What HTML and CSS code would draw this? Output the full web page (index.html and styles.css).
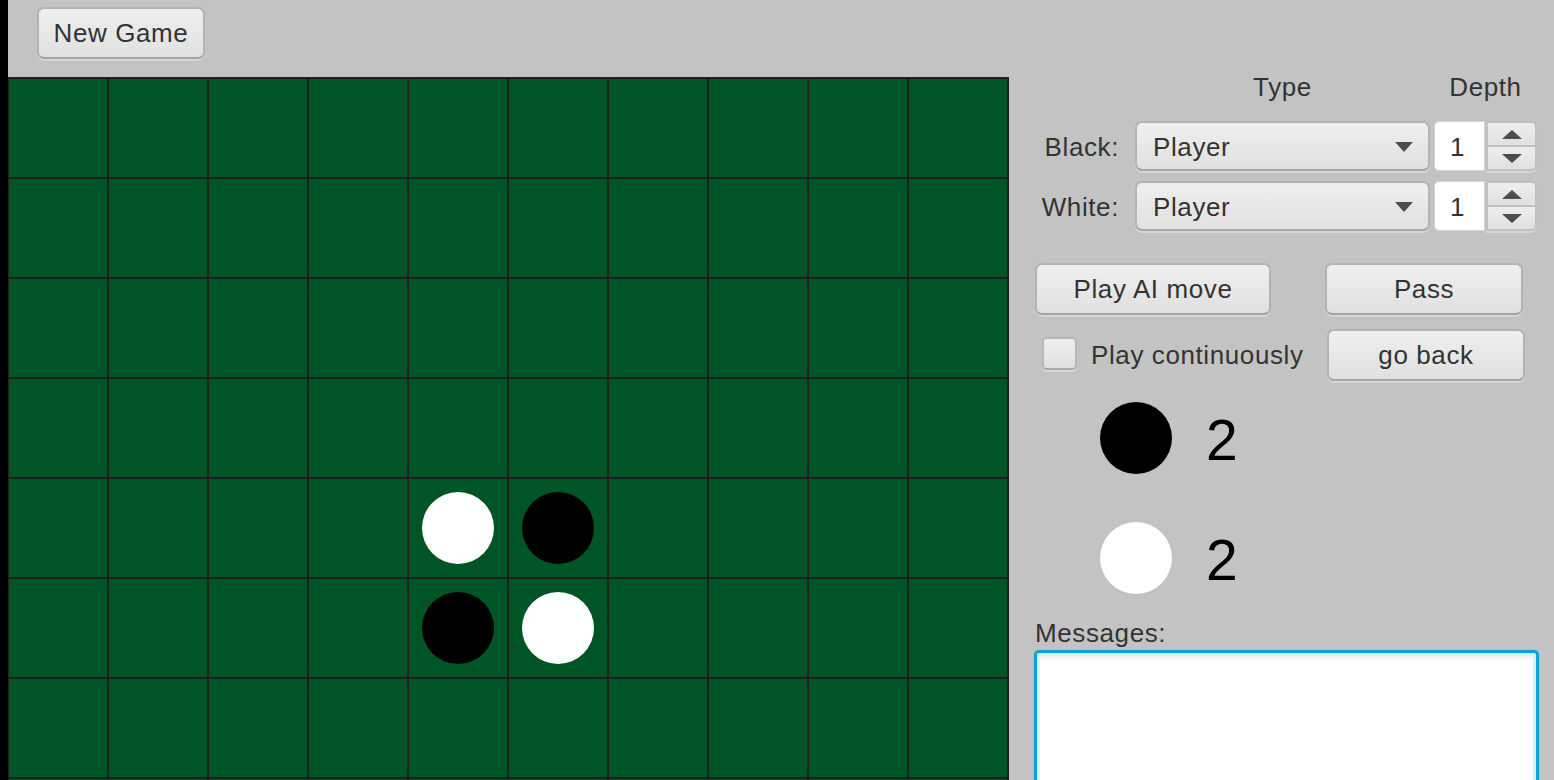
FILE: index.html
```html
<!DOCTYPE html>
<html lang="en">
<head>
<meta charset="utf-8">
<title>Othello</title>
<link rel="stylesheet" href="styles.css">
</head>
<body>
<div class="app">
  <div class="toolbar">
    <button class="btn new-game">New Game</button>
  </div>
  <div class="main">
    <div class="board">
      <div class="cell"></div><div class="cell"></div><div class="cell"></div><div class="cell"></div><div class="cell"></div><div class="cell"></div><div class="cell"></div><div class="cell"></div><div class="cell"></div><div class="cell"></div>
      <div class="cell"></div><div class="cell"></div><div class="cell"></div><div class="cell"></div><div class="cell"></div><div class="cell"></div><div class="cell"></div><div class="cell"></div><div class="cell"></div><div class="cell"></div>
      <div class="cell"></div><div class="cell"></div><div class="cell"></div><div class="cell"></div><div class="cell"></div><div class="cell"></div><div class="cell"></div><div class="cell"></div><div class="cell"></div><div class="cell"></div>
      <div class="cell"></div><div class="cell"></div><div class="cell"></div><div class="cell"></div><div class="cell"></div><div class="cell"></div><div class="cell"></div><div class="cell"></div><div class="cell"></div><div class="cell"></div>
      <div class="cell"></div><div class="cell"></div><div class="cell"></div><div class="cell"></div><div class="cell"><div class="disc white"></div></div><div class="cell"><div class="disc black"></div></div><div class="cell"></div><div class="cell"></div><div class="cell"></div><div class="cell"></div>
      <div class="cell"></div><div class="cell"></div><div class="cell"></div><div class="cell"></div><div class="cell"><div class="disc black"></div></div><div class="cell"><div class="disc white"></div></div><div class="cell"></div><div class="cell"></div><div class="cell"></div><div class="cell"></div>
      <div class="cell"></div><div class="cell"></div><div class="cell"></div><div class="cell"></div><div class="cell"></div><div class="cell"></div><div class="cell"></div><div class="cell"></div><div class="cell"></div><div class="cell"></div>
      <div class="cell"></div><div class="cell"></div><div class="cell"></div><div class="cell"></div><div class="cell"></div><div class="cell"></div><div class="cell"></div><div class="cell"></div><div class="cell"></div><div class="cell"></div>
      <div class="cell"></div><div class="cell"></div><div class="cell"></div><div class="cell"></div><div class="cell"></div><div class="cell"></div><div class="cell"></div><div class="cell"></div><div class="cell"></div><div class="cell"></div>
      <div class="cell"></div><div class="cell"></div><div class="cell"></div><div class="cell"></div><div class="cell"></div><div class="cell"></div><div class="cell"></div><div class="cell"></div><div class="cell"></div><div class="cell"></div>
    </div>
    <div class="side">
      <div class="hdr">
        <div class="hdr-gap"></div>
        <div class="hdr-type">Type</div>
        <div class="hdr-depth">Depth</div>
      </div>
      <div class="prow first">
        <div class="plabel">Black:</div>
        <div class="combo"><span class="combo-text">Player</span><span class="combo-arrow"></span></div>
        <div class="spinner">
          <div class="spin-field">1</div>
          <div class="spin-btns">
            <div class="spin-btn"><span class="tri-up"></span></div>
            <div class="spin-btn"><span class="tri-down"></span></div>
          </div>
        </div>
      </div>
      <div class="prow">
        <div class="plabel">White:</div>
        <div class="combo"><span class="combo-text">Player</span><span class="combo-arrow"></span></div>
        <div class="spinner">
          <div class="spin-field">1</div>
          <div class="spin-btns">
            <div class="spin-btn"><span class="tri-up"></span></div>
            <div class="spin-btn"><span class="tri-down"></span></div>
          </div>
        </div>
      </div>
      <div class="actions">
        <div class="act-cell"><button class="btn ai-btn">Play AI move</button></div>
        <div class="act-cell"><button class="btn pass-btn">Pass</button></div>
        <div class="act-cell check-row">
          <span class="checkbox"></span>
          <span class="check-label">Play continuously</span>
        </div>
        <div class="act-cell"><button class="btn back-btn">go back</button></div>
      </div>
      <div class="score first-score">
        <div class="disc black"></div>
        <div class="num">2</div>
      </div>
      <div class="score second-score">
        <div class="disc white"></div>
        <div class="num">2</div>
      </div>
      <div class="msg-label">Messages:</div>
      <div class="messages"></div>
    </div>
  </div>
</div>
</body>
</html>
```
FILE: styles.css
```css
* { box-sizing: border-box; }
html, body { margin: 0; padding: 0; height: 100%; overflow: hidden; }
body {
  background: #c3c3c3;
  font-family: "Liberation Sans", Arial, sans-serif;
  font-size: 26px;
  letter-spacing: 0.6px;
  color: #333333;
}
.app {
  border-left: 8px solid #000;
  height: 780px;
  display: flex;
  flex-direction: column;
}
.toolbar {
  height: 77px;
  flex: none;
  padding: 7px 0 0 29px;
}
.btn {
  display: flex;
  align-items: center;
  justify-content: center;
  height: 52px;
  padding: 0;
  margin: 0;
  border: 2px solid #b3b3b3;
  border-bottom-color: #a6a6a6;
  border-radius: 7px;
  background: linear-gradient(#efefef, #e0e0e0);
  box-shadow: 0 2px 0 #d6d6d6;
  font-family: inherit;
  font-size: 26px;
  letter-spacing: 0.6px;
  color: #333333;
  cursor: default;
}
.new-game { width: 168px; }
.main { display: flex; align-items: flex-start; }
.board {
  flex: none;
  display: grid;
  grid-template-columns: repeat(10, 98px);
  grid-auto-rows: 98px;
  gap: 2px;
  padding: 2px 2px 2px 1px;
  background: #1f1f1f;
}
.cell {
  background: #005526;
  display: flex;
  align-items: center;
  justify-content: center;
}
.disc { width: 72px; height: 72px; border-radius: 50%; flex: none; }
.disc.black { background: #000; }
.disc.white { background: #fff; }

.side { flex: 1; padding-left: 26px; }
.hdr { display: flex; height: 20px; line-height: 20px; }
.hdr-gap { width: 100px; }
.hdr-type { width: 295px; text-align: center; }
.hdr-depth { width: 103px; margin-left: 4px; text-align: center; }

.prow { display: flex; align-items: flex-start; height: 52px; margin-top: 8px; }
.prow.first { margin-top: 24px; }
.plabel { width: 84px; text-align: right; line-height: 30px; margin-top: 11px; }
.combo {
  margin-left: 16px;
  width: 295px;
  height: 50px;
  border: 2px solid #b3b3b3;
  border-bottom-color: #a6a6a6;
  border-radius: 7px;
  background: linear-gradient(#efefef, #e0e0e0);
  box-shadow: 0 2px 0 #d6d6d6;
  display: flex;
  align-items: center;
  justify-content: space-between;
  padding: 3px 15px 0 16px;
}
.combo-arrow {
  width: 0; height: 0;
  border-left: 9px solid transparent;
  border-right: 9px solid transparent;
  border-top: 10px solid #4d4d4d;
  margin-bottom: 2px;
}
.spinner { display: flex; margin-left: 4px; width: 103px; height: 50px; }
.spin-field {
  width: 51px;
  height: 50px;
  background: #fff;
  border: 1px solid #d4d4d4;
  border-radius: 5px 0 0 5px;
  padding: 3px 0 0 15px;
  display: flex;
  align-items: center;
  color: #333;
}
.spin-btns { width: 51px; margin-left: 1px; display: flex; flex-direction: column; }
.spin-btn {
  height: 25px;
  background: linear-gradient(#eeeeee, #e0e0e0);
  border: 2px solid #c0c0c0;
  display: flex;
  align-items: center;
  justify-content: center;
}
.spin-btn:first-child { border-radius: 0 6px 0 0; border-bottom-width: 1px; }
.spin-btn:last-child { border-radius: 0 0 6px 0; border-top-width: 1px; box-shadow: 0 2px 0 #d6d6d6; }
.tri-up {
  width: 0; height: 0;
  border-left: 10px solid transparent;
  border-right: 10px solid transparent;
  border-bottom: 9px solid #4d4d4d;
}
.tri-down {
  width: 0; height: 0;
  border-left: 10px solid transparent;
  border-right: 10px solid transparent;
  border-top: 9px solid #4d4d4d;
}

.actions {
  margin-top: 30px;
  display: grid;
  grid-template-columns: 290px 202px;
  grid-auto-rows: 54px;
  row-gap: 12px;
}
.ai-btn { width: 236px; }
.pass-btn { width: 198px; }
.back-btn { width: 198px; margin-left: 2px; }
.check-row { display: flex; align-items: center; padding-bottom: 6px; }
.checkbox {
  margin-left: 7px;
  width: 35px;
  height: 33px;
  border: 2px solid #b8b8b8;
  border-bottom-color: #a8a8a8;
  border-radius: 5px;
  background: linear-gradient(#efefef, #e0e0e0);
  box-shadow: 0 2px 0 #d6d6d6;
  flex: none;
}
.check-label { margin-left: 14px; line-height: 30px; padding-top: 4px; }

.score { display: flex; align-items: center; height: 72px; padding-left: 65px; }
.first-score { margin-top: 19px; }
.second-score { margin-top: 48px; }
.score .num {
  margin-left: 34px;
  font-size: 57px;
  letter-spacing: 0;
  line-height: 1;
  color: #000;
  padding-top: 5px;
}
.msg-label { margin-top: 24px; line-height: 30px; height: 30px; }
.messages {
  margin-top: 2px;
  margin-left: -1px;
  width: 505px;
  height: 200px;
  background: #fff;
  border: 3px solid #0aa2d8;
  border-radius: 5px;
  box-shadow: 0 0 0 1px #9ec6d6, inset 0 0 0 3px #d9f0f8, inset 0 7px 5px -3px rgba(0,0,0,0.10);
}
```
